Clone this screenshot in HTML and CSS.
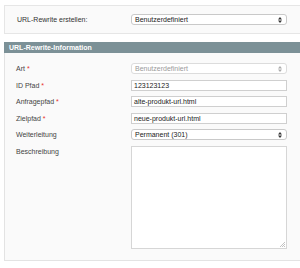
FILE: index.html
```html
<!DOCTYPE html>
<html>
<head>
    <title>URL-Rewrite</title>
    <link rel="stylesheet" href="styles.css">
</head>
<body>
    <div class="page">
        <div class="create-box">
            <label class="create-label">URL-Rewrite erstellen:</label>
            <div class="select">
                <span>Benutzerdefiniert</span>
                <svg class="arrows" width="4" height="6" viewBox="0 0 4 6"><path d="M0 2.4 L2 0 L4 2.4 Z M0 3.6 L4 3.6 L2 6 Z" fill="#333"/></svg>
            </div>
        </div>

        <div class="section-head">URL-Rewrite-Information</div>
        <div class="panel">
            <div class="form-grid">
                <label>Art <span class="req">*</span></label>
                <div class="select disabled">
                    <span>Benutzerdefiniert</span>
                    <svg class="arrows" width="4" height="6" viewBox="0 0 4 6"><path d="M0 2.4 L2 0 L4 2.4 Z M0 3.6 L4 3.6 L2 6 Z" fill="#aaa"/></svg>
                </div>

                <label>ID Pfad <span class="req">*</span></label>
                <div class="input">123123123</div>

                <label>Anfragepfad <span class="req">*</span></label>
                <div class="input">alte-produkt-url.html</div>

                <label>Zielpfad <span class="req">*</span></label>
                <div class="input">neue-produkt-url.html</div>

                <label>Weiterleitung</label>
                <div class="select">
                    <span>Permanent (301)</span>
                    <svg class="arrows" width="4" height="6" viewBox="0 0 4 6"><path d="M0 2.4 L2 0 L4 2.4 Z M0 3.6 L4 3.6 L2 6 Z" fill="#333"/></svg>
                </div>

                <label class="top">Beschreibung</label>
                <div class="textarea">
                    <svg class="grip" width="5" height="5" viewBox="0 0 5 5"><path d="M5 0 L0 5 M5 2 L2 5 M5 4 L4 5" stroke="#aaa" stroke-width="0.7"/></svg>
                </div>
            </div>
        </div>
    </div>
</body>
</html>
```

FILE: styles.css
```css
body {
    margin: 0;
    font-family: 'Liberation Sans', Arial, sans-serif;
    font-size: 7px;
    color: #333;
    background-color: #fff;
}
.page {
    padding: 5px 0 0 4px;
}
.create-box {
    display: flex;
    align-items: center;
    height: 27px;
    padding-left: 12px;
    background-color: #fafafa;
    border: 1px solid #e6e6e6;
    border-right: none;
}
.create-label {
    width: 114px;
}
.select {
    position: relative;
    box-sizing: border-box;
    width: 156px;
    height: 11px;
    display: flex;
    align-items: center;
    padding-left: 3px;
    background-color: #fff;
    border: 1px solid #c9c9c9;
    border-radius: 3px;
    color: #222;
}
.select.disabled {
    color: #9a9a9a;
    border-color: #dcdcdc;
}
.arrows {
    position: absolute;
    right: 4px;
    top: 2px;
}
.section-head {
    margin-top: 8px;
    height: 11px;
    line-height: 11px;
    padding-left: 5px;
    background-color: #7c9197;
    color: #fff;
    font-weight: bold;
}
.panel {
    padding: 10px 0 11px 11px;
    background-color: #fafafa;
    border: 1px solid #e3e3e3;
    border-top: none;
    border-right: none;
}
.form-grid {
    display: grid;
    grid-template-columns: 115px 156px;
    row-gap: 5.5px;
    align-items: center;
}
.form-grid label {
    color: #444;
}
.form-grid label.top {
    align-self: start;
    padding-top: 2px;
}
.req {
    color: #e8302a;
}
.input {
    box-sizing: border-box;
    height: 11px;
    line-height: 9px;
    padding-left: 2px;
    background-color: #fff;
    border: 1px solid #cfcfcf;
    color: #222;
}
.textarea {
    position: relative;
    box-sizing: border-box;
    height: 103px;
    background-color: #fff;
    border: 1px solid #d6d6d6;
}
.grip {
    position: absolute;
    right: 1px;
    bottom: 1px;
}
```
